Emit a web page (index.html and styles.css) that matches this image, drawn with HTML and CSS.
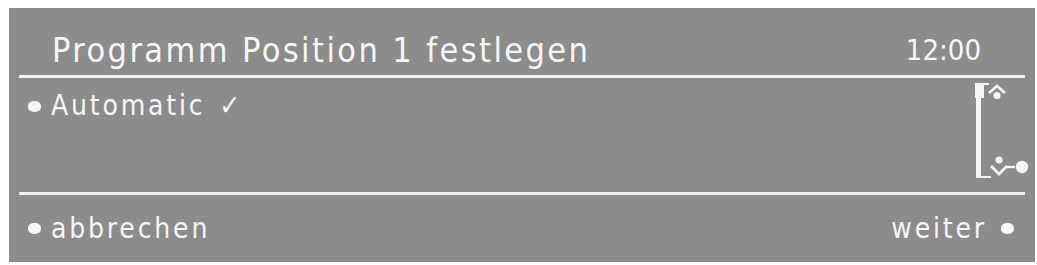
FILE: index.html
```html
<!DOCTYPE html>
<html lang="de">
<head>
<meta charset="utf-8">
<title>Programm Position 1 festlegen</title>
<link rel="stylesheet" href="styles.css">
</head>
<body>
<div class="panel">
  <div class="header">
    <span class="title">Programm Position 1 festlegen</span>
    <span class="time">12:00</span>
  </div>
  <div class="rule"></div>
  <div class="content">
    <div class="item"><span class="dot"></span><span class="label">Automatic <span class="check">✓</span></span></div>
    <svg class="scroll" width="58" height="96" viewBox="0 0 58 96">
      <rect x="2" y="0" width="9" height="15" fill="#f4f4f4"/>
      <rect x="2" y="0" width="14" height="2" fill="#f4f4f4"/>
      <rect x="3" y="0" width="5" height="95" fill="#f4f4f4"/>
      <rect x="3" y="93" width="15" height="2" fill="#f4f4f4"/>
      <path d="M16 10 L24 3 L32 10" fill="none" stroke="#f4f4f4" stroke-width="2.8"/>
      <circle cx="24" cy="12.5" r="3.6" fill="#f4f4f4"/>
      <circle cx="26" cy="77" r="3.6" fill="#f4f4f4"/>
      <path d="M18 83 L26 91 L34 83" fill="none" stroke="#f4f4f4" stroke-width="2.8"/>
      <path d="M34 84 L42 84" fill="none" stroke="#f4f4f4" stroke-width="2.4"/>
      <circle cx="49" cy="84" r="6.2" fill="#f4f4f4"/>
    </svg>
  </div>
  <div class="rule"></div>
  <div class="footer">
    <div class="item"><span class="dot"></span><span class="label">abbrechen</span></div>
    <div class="item"><span class="label">weiter</span><span class="dot dot-right"></span></div>
  </div>
</div>
</body>
</html>
```

FILE: styles.css
```css
html, body {
  margin: 0;
  padding: 0;
  background: #ffffff;
}

body {
  font-family: "DejaVu Sans Condensed", "DejaVu Sans", sans-serif;
  color: #f6f6f6;
}

.panel {
  margin: 8px 0 0 9px;
  width: 1026px;
  height: 254px;
  background: #8d8c8c;
  display: flex;
  flex-direction: column;
  box-sizing: border-box;
}

.header {
  height: 67px;
  box-sizing: border-box;
  padding: 0 54px 0 43px;
  display: flex;
  justify-content: space-between;
  align-items: flex-end;
}

.title {
  font-size: 34px;
  line-height: 34px;
  letter-spacing: 2.4px;
  padding-bottom: 8px;
}

.time {
  font-size: 29px;
  line-height: 29px;
  padding-bottom: 10px;
}

.rule {
  height: 3px;
  margin: 0 10px;
  background: #f2f2f2;
}

.content {
  height: 114px;
  display: flex;
  justify-content: space-between;
  align-items: flex-start;
  padding: 0 4px 0 19px;
}

.item {
  display: flex;
  align-items: center;
}

.content .item {
  margin-top: 14px;
}

.label {
  font-size: 28px;
  line-height: 28px;
  letter-spacing: 2.8px;
}

.check {
  margin-left: 3px;
}

.dot {
  width: 13px;
  height: 11px;
  border-radius: 45%;
  background: #f6f6f6;
  margin-right: 10px;
}

.dot-right {
  margin: 0 0 0 14px;
}

.scroll {
  margin-top: 5px;
}

.footer {
  flex: 1;
  display: flex;
  justify-content: space-between;
  align-items: center;
  padding: 0 21px 0 19px;
}
```
